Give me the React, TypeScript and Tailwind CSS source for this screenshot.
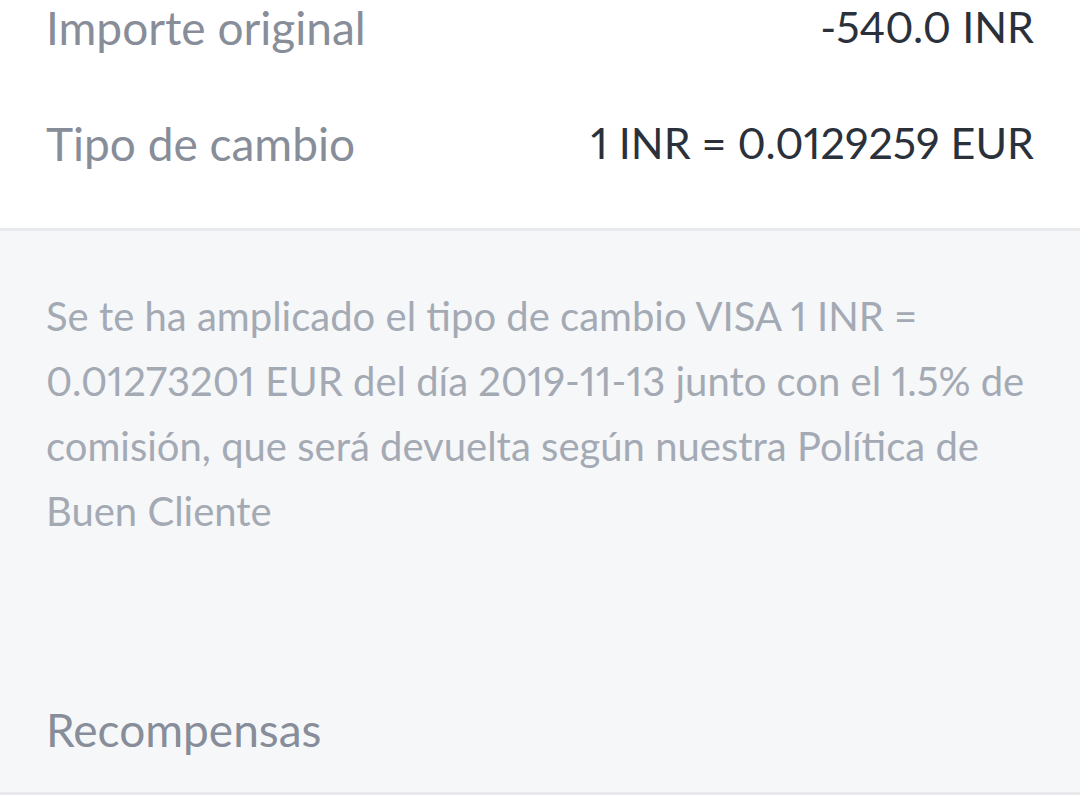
export default function App() {
  return (
    <div className="min-h-screen bg-white proportional-nums" style={{ fontFamily: "Lato, 'Noto Sans', sans-serif" }}>
      <div className="bg-white px-[46px] mt-[-31px] pb-[27px]">
        <div className="flex h-[116px] items-center justify-between">
          <span className="text-[46px] text-[#878d99]">Importe original</span>
          <span className="text-[43px] text-[#2b313b]">-540.0 INR</span>
        </div>
        <div className="flex h-[116px] items-center justify-between">
          <span className="text-[46px] text-[#878d99]">Tipo de cambio</span>
          <span className="text-[43px] text-[#2b313b]">1 INR = 0.0129259 EUR</span>
        </div>
      </div>
      <div className="border-y-[3px] border-[#e8eaee] bg-[#f6f7f9]">
        <p className="px-[46px] pt-[53px] text-[40px] leading-[65px] whitespace-nowrap text-[#a4aab4]">
          <span className="block">Se te ha amplicado el tipo de cambio VISA 1 INR =</span>
          <span className="block">0.01273201 EUR del día 2019-11-13 junto con el 1.5% de</span>
          <span className="block">comisión, que será devuelta según nuestra Política de</span>
          <span className="block">Buen Cliente</span>
        </p>
        <div className="h-[156px]" />
        <h2 className="px-[46px] pb-[32px] text-[46px] leading-[60px] text-[#878d99]">Recompensas</h2>
      </div>
    </div>
  );
}
